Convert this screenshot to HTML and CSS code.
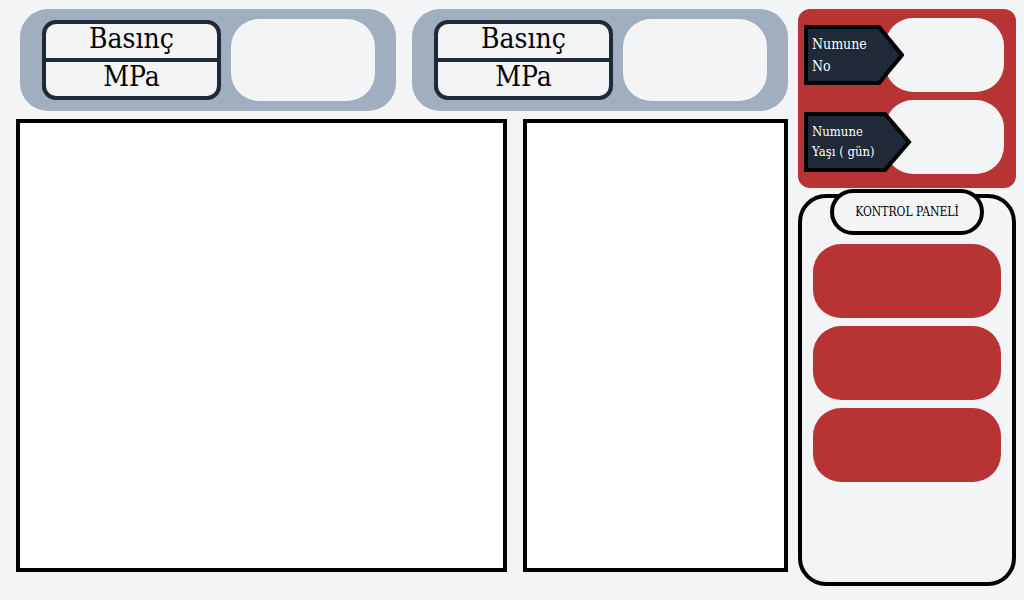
FILE: index.html
```html
<!DOCTYPE html>
<html lang="tr">
<head>
<meta charset="utf-8">
<meta name="viewport" content="width=device-width, initial-scale=1">
<title>Kontrol Paneli</title>
<link rel="stylesheet" href="styles.css">
</head>
<body>
<div class="page">
  <main class="main">
    <div class="gauges">
      <section class="gauge">
        <label class="gauge-label" for="p1"><span class="gauge-name">Basınç</span><span class="gauge-unit">MPa</span></label>
        <input class="field gauge-value" id="p1" type="text" readonly>
      </section>
      <section class="gauge">
        <label class="gauge-label" for="p2"><span class="gauge-name">Basınç</span><span class="gauge-unit">MPa</span></label>
        <input class="field gauge-value" id="p2" type="text" readonly>
      </section>
    </div>
    <div class="charts">
      <div class="chart"></div>
      <div class="chart"></div>
    </div>
  </main>
  <aside class="side">
    <form class="sample">
      <div class="sample-row">
        <label class="tag tag-no" for="no">
          <svg class="tag-shape" viewBox="0 0 100 60" aria-hidden="true"><path d="M2 2H75L98 30L75 58H2Z"/></svg>
          <span class="tag-text">Numune<br>No</span>
        </label>
        <input class="field" id="no" type="text">
      </div>
      <div class="sample-row">
        <label class="tag tag-age" for="age">
          <svg class="tag-shape" viewBox="0 0 108 60" aria-hidden="true"><path d="M2 2H81L105 30L81 58H2Z"/></svg>
          <span class="tag-text">Numune<br>Yaşı ( gün)</span>
        </label>
        <input class="field" id="age" type="text">
      </div>
    </form>
    <section class="control">
      <h2 class="control-title">KONTROL PANELİ</h2>
      <button class="action" type="button" aria-label="1"></button>
      <button class="action" type="button" aria-label="2"></button>
      <button class="action" type="button" aria-label="3"></button>
    </section>
  </aside>
</div>
</body>
</html>
```

FILE: styles.css
```css
* { box-sizing: border-box; }

body {
  margin: 0;
  background: #f3f4f6;
  color: #000;
  font-family: "DejaVu Serif Condensed", "DejaVu Serif", serif;
}

.page {
  display: grid;
  grid-template-columns: minmax(0, 1fr) 218px;
  gap: 10px;
  min-height: 100vh;
  padding: 9px 8px 14px 16px;
}

.main {
  display: flex;
  flex-direction: column;
  gap: 8px;
  padding-bottom: 14px;
}

.gauges {
  display: grid;
  grid-template-columns: 1fr 1fr;
  gap: 16px;
  padding-left: 4px;
}

.gauge {
  display: grid;
  grid-template-columns: minmax(0, 179fr) minmax(0, 144fr);
  align-items: center;
  gap: 10px;
  padding: 10px 21px 10px 22px;
  border-radius: 28px;
  background: #a0aec0;
}

.gauge-label {
  border: 4px solid #1f2937;
  border-radius: 14px;
  background: #f3f4f6;
  font-size: 28px;
  line-height: 30px;
  text-align: center;
}

.gauge-name,
.gauge-unit {
  display: block;
  padding-bottom: 4px;
}

.gauge-unit {
  border-top: 4px solid #1f2937;
}

.field {
  width: 100%;
  min-width: 0;
  height: 74px;
  padding: 0 24px;
  border: 0;
  border-radius: 28px;
  background: #f3f4f6;
  font: inherit;
}

.gauge-value {
  height: 82px;
}

.charts {
  flex: 1;
  display: grid;
  grid-template-columns: 491fr 265fr;
  gap: 16px;
}

.chart {
  border: 4px solid #000;
  background: #fff;
}

.side {
  display: flex;
  flex-direction: column;
  gap: 6px;
}

.sample {
  display: grid;
  gap: 8px;
  padding: 9px 12px 14px 6px;
  border-radius: 12px;
  background: #b83434;
}

.sample-row {
  display: grid;
  grid-template-columns: 81px 1fr;
  align-items: center;
}

.tag {
  position: relative;
  z-index: 1;
  display: flex;
  align-items: center;
  height: 60px;
  padding-left: 8px;
  color: #fff;
  white-space: nowrap;
}

.tag-no {
  width: 100px;
  font-size: 14px;
  line-height: 22px;
}

.tag-age {
  width: 108px;
  margin-top: 10px;
  font-size: 13px;
  line-height: 20px;
}

.tag-shape {
  position: absolute;
  inset: 0;
  width: 100%;
  height: 100%;
  fill: #1f2937;
  stroke: #000;
  stroke-width: 4;
}

.tag-text { position: relative; }

.control {
  position: relative;
  flex: 1;
  display: flex;
  flex-direction: column;
  gap: 8px;
  padding: 46px 11px 12px;
  border: 4px solid #000;
  border-radius: 28px;
}

.control-title {
  position: absolute;
  top: -9px;
  left: 28px;
  right: 28px;
  margin: 0;
  padding: 9px 0;
  border: 4px solid #000;
  border-radius: 24px;
  background: #f3f4f6;
  font-size: 12px;
  font-weight: 400;
  line-height: 20px;
  text-align: center;
}

.action {
  height: 74px;
  border: 0;
  border-radius: 28px;
  background: #b83434;
  color: #fff;
  font: inherit;
  cursor: pointer;
}
```
